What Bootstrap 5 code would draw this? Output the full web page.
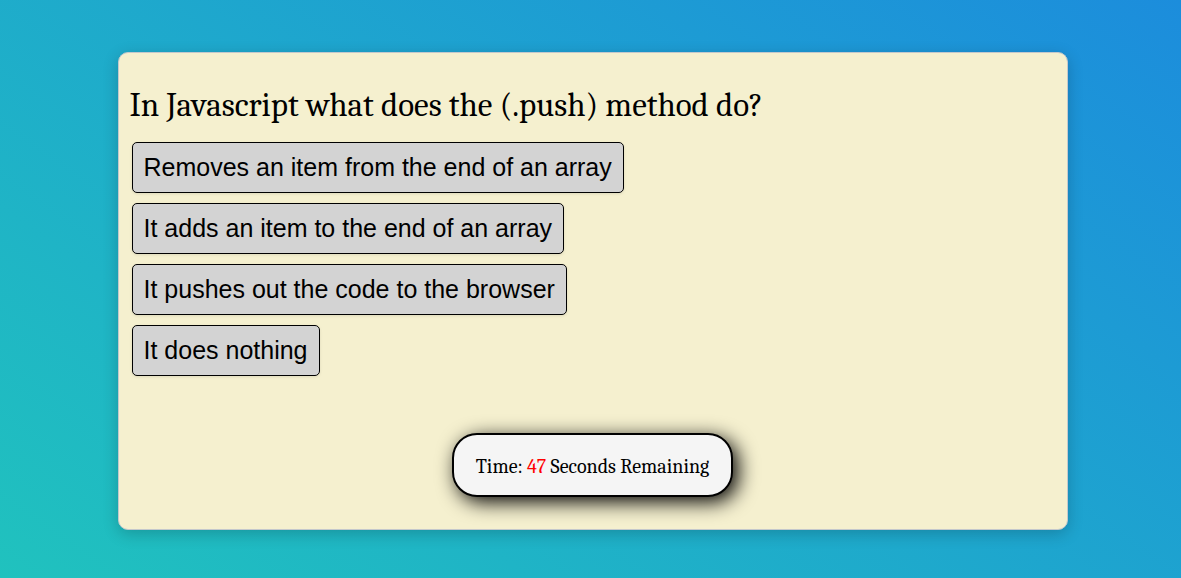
<!DOCTYPE html>
<html lang="en">
<head>
<meta charset="utf-8">
<meta name="viewport" content="width=device-width, initial-scale=1">
<title>Code Quiz</title>
<link href="https://cdn.jsdelivr.net/npm/bootstrap@5.3.0/dist/css/bootstrap.min.css" rel="stylesheet">
<style>
body { min-height: 100vh; color: #000; background: linear-gradient(35deg, #20c2be, #1c8ddc) fixed; font-family: Cambria, "Noto Serif", "Liberation Serif", serif; }
.quiz { width: 100%; max-width: 950px; padding: 32px 11px; background: #f5f0cf; border: 1px solid #c4c8cc; border-radius: 10px; box-shadow: 0 4px 16px rgba(0,0,0,.2); }
.question { margin-bottom: 17px; font-size: 33px; line-height: 40px; }
.answers { gap: 10px; padding: 0 2px; }
.answer { padding: 6px 11px; font: 25px/37px "Liberation Sans", Arial, sans-serif; color: #000; background: #d3d3d3; border: 1px solid #000; border-radius: 5px; box-shadow: 0 1px 3px rgba(0,0,0,.1); }
.timer-row { margin-top: 57px; }
.timer { padding: 20px 22px 16px; font-size: 20px; line-height: 24px; background: #f5f5f5; border: 2px solid #000; border-radius: 25px; box-shadow: 5px 5px 20px #000; }
.seconds { color: #f00; }
</style>
</head>
<body class="d-flex justify-content-center align-items-center ps-1 pt-1">
<main class="quiz">
<h1 class="question fw-normal">In Javascript what does the (.push) method do?</h1>
<div class="answers d-flex flex-column align-items-start">
<button type="button" class="answer">Removes an item from the end of an array</button>
<button type="button" class="answer">It adds an item to the end of an array</button>
<button type="button" class="answer">It pushes out the code to the browser</button>
<button type="button" class="answer">It does nothing</button>
</div>
<div class="timer-row d-flex justify-content-center"><div class="timer">Time: <span class="seconds">47</span> Seconds Remaining</div></div>
</main>
<script src="https://cdn.jsdelivr.net/npm/bootstrap@5.3.0/dist/js/bootstrap.bundle.min.js"></script>
</body>
</html>
